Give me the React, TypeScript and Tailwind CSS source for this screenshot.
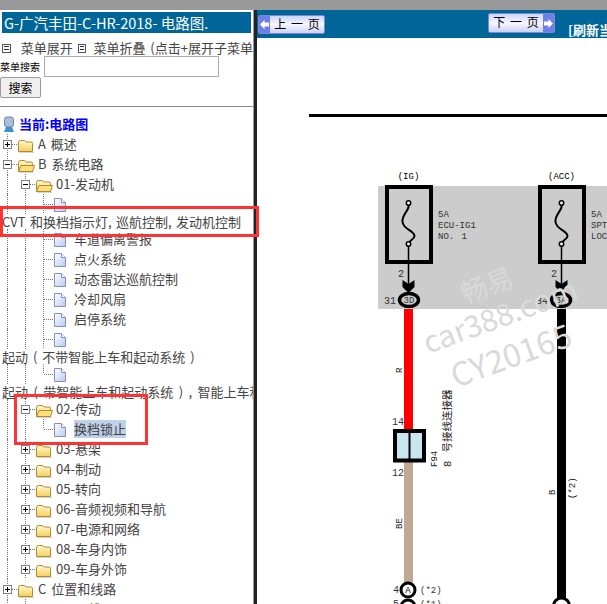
import React from 'react';

const FONT = '"Noto Sans CJK SC", "Liberation Sans", sans-serif';
const DIAGRAM_FONT = '"Liberation Mono", "Noto Sans CJK SC", monospace';

function Expander({ open }: { open: boolean }) {
  return (
    <svg width="18" height="20" className="shrink-0">
      <line x1="7.5" y1="0" x2="7.5" y2="20" stroke="#777" strokeDasharray="1 1" />
      <line x1="8" y1="10.5" x2="18" y2="10.5" stroke="#777" strokeDasharray="1 1" />
      <rect x="3.5" y="6.5" width="8" height="8" fill="#fff" stroke="#808080" />
      <line x1="5" y1="10.5" x2="10" y2="10.5" stroke="#000" />
      {!open && <line x1="7.5" y1="8" x2="7.5" y2="13" stroke="#000" />}
    </svg>
  );
}

function Connector({ last }: { last?: boolean }) {
  return (
    <svg width="18" height="20" className="shrink-0">
      <line x1="7.5" y1="0" x2="7.5" y2={last ? 10 : 20} stroke="#777" strokeDasharray="1 1" />
      <line x1="8" y1="10.5" x2="18" y2="10.5" stroke="#777" strokeDasharray="1 1" />
    </svg>
  );
}

function Folder({ open }: { open: boolean }) {
  return (
    <svg width="18" height="20" className="shrink-0">
      <defs>
        <linearGradient id="fold" x1="0" y1="0" x2="0" y2="1">
          <stop offset="0" stopColor="#fff9d0" />
          <stop offset="1" stopColor="#f6cf5c" />
        </linearGradient>
      </defs>
      <path d="M0.5 8.5 Q0.5 6.5 2.5 6.500 H6.5 L8 8 H13 Q14.500 8 14.500 9.5 V17.5 H0.5 Z" fill="url(#fold)" stroke="#b08a30" />
      {open && <path d="M0.5 17.5 L3 11.5 H16.5 L14.500 17.5 Z" fill="#fbe07a" stroke="#b08a30" />}
      <line x1="1" y1="18.5" x2="16" y2="18.5" stroke="#d5d5d5" />
    </svg>
  );
}

function FileIcon() {
  return (
    <svg width="18" height="20" className="shrink-0">
      <defs>
        <linearGradient id="page" x1="0" y1="0" x2="1" y2="1">
          <stop offset="0" stopColor="#fff" />
          <stop offset="1" stopColor="#b9cbf0" />
        </linearGradient>
      </defs>
      <path d="M0.5 4.5 H7.5 L11.5 8.5 V17.5 H0.5 Z" fill="url(#page)" stroke="#8590c2" />
      <path d="M7.5 4.5 V8.5 H11.5" fill="#fff" stroke="#8590c2" />
    </svg>
  );
}

function Guides({ count }: { count: number }) {
  return (
    <>
      {Array.from({ length: count }).map((_, i) => (
        <div key={i} className="w-[18px] h-full shrink-0">
          <div className="ml-[7px] h-full border-l border-dotted border-[#777]" />
        </div>
      ))}
    </>
  );
}

function FolderRow({ level, open, text }: { level: number; open?: boolean; text: string }) {
  return (
    <div className="flex items-center h-5 whitespace-nowrap">
      <Guides count={level} />
      <Expander open={!!open} />
      <Folder open={!!open} />
      <span className="ml-[2px]">{text}</span>
    </div>
  );
}

function FileRow({ text, last, selected }: { text?: string; last?: boolean; selected?: boolean }) {
  return (
    <div className="flex items-center h-5 whitespace-nowrap">
      <Guides count={2} />
      <Connector last={last} />
      <FileIcon />
      {text && (
        <span className={`ml-[2px] leading-[18px] ${selected ? 'bg-[#bfd0ea]' : ''}`}>{text}</span>
      )}
    </div>
  );
}

function TextRow({ text, className = '' }: { text: string; className?: string }) {
  return <div className={`h-[15px] leading-[15px] pl-[2px] whitespace-nowrap ${className}`}>{text}</div>;
}

function PageButton({ label, dir, className }: { label: string; dir: 'prev' | 'next'; className: string }) {
  const arrow = (
    <div className="w-[11px] h-full bg-[#6f7fe8] flex items-center justify-center">
      <svg width="9" height="9" viewBox="0 0 9 9">
        <path d={dir === 'prev' ? 'M0 4.5 L4.5 0 V2.5 H9 V6.5 H4.5 V9 Z' : 'M9 4.5 L4.5 0 V2.5 H0 V6.5 H4.5 V9 Z'} fill="#fff" />
      </svg>
    </div>
  );
  return (
    <div className={`flex w-[67px] shrink-0 items-stretch rounded-[2px] border border-[#8088c8] bg-gradient-to-b from-[#ccd4fa] via-[#f6f7ff] to-[#ccd0f6] text-black ${className}`}>
      {dir === 'prev' && arrow}
      <div className="flex-1 text-center text-[12px] leading-[16px] whitespace-nowrap">{label}</div>
      {dir === 'next' && arrow}
    </div>
  );
}

function FuseBox({ x, label }: { x: number; label: string }) {
  const cx = x + 23.5;
  return (
    <g>
      <text x={cx} y="179" textAnchor="middle" fontSize="9">{label}</text>
      <rect x={x + 2} y="187" width="44" height="75" fill="#ccc" stroke="#000" strokeWidth="4" />
      <path d={`M${cx} 204 C${cx + 2} 210 ${cx - 7} 214 ${cx - 6} 222 C${cx - 5} 230 ${cx + 6} 230 ${cx + 6} 236 C${cx + 6} 240 ${cx} 240 ${cx} 244`} fill="none" stroke="#000" strokeWidth="2" />
      <circle cx={cx} cy="203" r="2.2" fill="#fff" stroke="#000" strokeWidth="1.5" />
      <circle cx={cx} cy="244" r="2.2" fill="#fff" stroke="#000" strokeWidth="1.5" />
      <line x1={cx} y1="246" x2={cx} y2="285" stroke="#000" strokeWidth="1.5" />
      <path d={`M${cx - 6} 280 L${cx} 284 L${cx + 6} 280 L${cx + 6} 287 L${cx} 293 L${cx - 6} 287 Z`} fill="#000" />
    </g>
  );
}

function Diagram() {
  return (
    <svg viewBox="257 38 350 566" width="350" height="566" className="block" style={{ fontFamily: DIAGRAM_FONT }}>
      <rect x="309" y="114" width="298" height="3" fill="#000" />
      <rect x="378" y="186" width="229" height="123" fill="#ccc" />
      <rect x="404" y="309" width="9" height="121" fill="#f00" />
      <rect x="404" y="462" width="9" height="120" fill="#bfa993" />
      <rect x="557" y="309" width="9" height="290" fill="#000" />

      <FuseBox x={385} label="(IG)" />
      <FuseBox x={538} label="(ACC)" />

      <g fontSize="9" fill="#333">
        <text x="438" y="217">5A</text>
        <text x="438" y="228">ECU-IG1</text>
        <text x="438" y="239">NO. 1</text>
        <text x="591" y="217">5A</text>
        <text x="591" y="228">SPT</text>
        <text x="591" y="239">LOC</text>
        <text x="398" y="277" fontSize="10">2</text>
        <text x="551" y="277" fontSize="10">2</text>
        <text x="384" y="304" fontSize="10">31</text>
        <text x="536" y="304" fontSize="10">34</text>
      </g>
      <ellipse cx="409" cy="300" rx="9.500" ry="6.500" fill="#ccc" stroke="#000" strokeWidth="3.5" />
      <ellipse cx="561" cy="300" rx="9.500" ry="6.500" fill="#ccc" stroke="#000" strokeWidth="3.5" />
      <text x="409" y="303" textAnchor="middle" fontSize="9" fill="#333">3D</text>
      <text x="561" y="303" textAnchor="middle" fontSize="9" fill="#333">3A</text>

      <rect x="395" y="431" width="29" height="29.500" fill="#c9e6ef" stroke="#000" strokeWidth="4" />
      <line x1="409.500" y1="431" x2="409.500" y2="460" stroke="#000" strokeWidth="2" />
      <g fontSize="10" fill="#333">
        <text x="392" y="425">14</text>
        <text x="392" y="476">12</text>
        <text x="393" y="593">4</text>
        <text x="420" y="593" fontSize="9">(*2)</text>
        <text x="393" y="607">5</text>
        <text x="420" y="607" fontSize="9">(*1)</text>
      </g>
      <g fontSize="9" fill="#222">
        <text transform="translate(402 373) rotate(-90)">R</text>
        <text transform="translate(402 529) rotate(-90)">BE</text>
        <text transform="translate(437 467) rotate(-90)">F94</text>
        <text transform="translate(451 467) rotate(-90)" fontSize="10.500">8 号接线连接器</text>
        <text transform="translate(555 495) rotate(-90)">B</text>
        <text transform="translate(575 499) rotate(-90)">(*2)</text>
      </g>
      <circle cx="408" cy="590" r="7" fill="#fff" stroke="#000" strokeWidth="3" />
      <circle cx="408" cy="607" r="7" fill="#fff" stroke="#000" strokeWidth="3" />
      <circle cx="561.500" cy="606" r="8" fill="#fff" stroke="#000" strokeWidth="3" />
      <text x="408" y="593" textAnchor="middle" fontSize="9">A</text>

      <g fill="#d9d9d9" style={{ fontFamily: FONT }}>
        <text transform="translate(465 304) rotate(-20)" fontSize="27">畅易</text>
        <text transform="translate(428 354) rotate(-20)" fontSize="30">car388.com</text>
        <text transform="translate(456 388) rotate(-20)" fontSize="32">CY20165</text>
      </g>
    </svg>
  );
}

export default function App() {
  return (
    <div className="relative w-[607px] h-[604px] overflow-hidden bg-white text-[13px] text-[#444] [word-spacing:2px]" style={{ fontFamily: FONT }}>
      <div className="h-[10px] bg-[#999]" />
      <div className="flex h-[594px]">
        <div className="w-[253px] shrink-0 overflow-hidden">
          <div className="mx-[2px] mt-[2px] h-[21px] w-[249px] bg-[#006699] pl-[2px] text-[14.500px] leading-[21px] text-white whitespace-nowrap [word-spacing:0px]">
            G-广汽丰田-C-HR-2018- 电路图.
          </div>
          <div className="flex items-center h-[20px] mt-[5px] whitespace-nowrap">
            <span className="ml-[2px] flex h-[9px] w-[9px] flex-col justify-evenly border border-[#555] px-px">
              <i className="block h-px bg-[#333]" />
              <i className="block h-px bg-[#333]" />
            </span>
            <span className="ml-[10px]">菜单展开</span>
            <span className="ml-[5px] flex h-[9px] w-[9px] flex-col justify-evenly border border-[#555] px-px">
              <i className="block h-px bg-[#333]" />
              <i className="block h-px bg-[#333]" />
            </span>
            <span className="ml-[7px]">菜单折叠 (点击+展开子菜单</span>
          </div>
          <div className="flex items-center mt-[-2px] h-[21px]">
            <span className="w-[44px] text-[10px] text-black whitespace-nowrap">菜单搜索</span>
            <input className="w-[175px] h-[21px] border border-[#aaa] bg-white" />
          </div>
          <button className="block w-[41px] h-[21px] border border-[#999] rounded-[2px] bg-[#efefef] text-[12px] leading-[18px] text-black">
            搜索
          </button>
          <div className="mt-[8px] h-px bg-[#888]" />

          <div className="flex items-center h-5 mt-[7px] font-bold text-[#0000ff]">
            <svg width="14" height="17" viewBox="0 0 14 17" className="ml-[2px] mr-[3px]">
              <rect x="2.500" y="1" width="9" height="10" rx="2.500" fill="#a9bcd8" stroke="#6a84ad" />
              <path d="M4 11 L2 16 H12 L10 11 Z" fill="#3f8ccf" />
            </svg>
            当前:电路图
          </div>
          <FolderRow level={0} text="A 概述" />
          <FolderRow level={0} open text="B 系统电路" />
          <FolderRow level={1} open text="01-发动机" />
          <FileRow />
          <TextRow text="CVT 和换档指示灯, 巡航控制, 发动机控制" className="[word-spacing:1.500px]" />
          <FileRow text="车道偏离警报" />
          <FileRow text="点火系统" />
          <FileRow text="动态雷达巡航控制" />
          <FileRow text="冷却风扇" />
          <FileRow text="启停系统" />
          <FileRow />
          <TextRow text="起动 ( 不带智能上车和起动系统 )" />
          <FileRow last />
          <TextRow text="起动 ( 带智能上车和起动系统 ) , 智能上车和起动系统" className="[word-spacing:2.500px]" />
          <FolderRow level={1} open text="02-传动" />
          <FileRow text="换档锁止" last selected />
          <FolderRow level={1} text="03-悬架" />
          <FolderRow level={1} text="04-制动" />
          <FolderRow level={1} text="05-转向" />
          <FolderRow level={1} text="06-音频视频和导航" />
          <FolderRow level={1} text="07-电源和网络" />
          <FolderRow level={1} text="08-车身内饰" />
          <FolderRow level={1} text="09-车身外饰" />
          <FolderRow level={0} text="C 位置和线路" />
          <FolderRow level={1} text="01-配线" />
        </div>

        <div className="w-[4px] shrink-0 border-l border-[#999] bg-[#222]" />

        <div className="flex-1 min-w-0 overflow-hidden">
          <div className="flex h-[28px] bg-[#006699]">
            <PageButton label="上 一 页" dir="prev" className="mt-[5px] h-[19px] ml-px" />
            <PageButton label="下 一 页" dir="next" className="mt-[3px] h-[20px] ml-[163px]" />
            <span className="ml-[13px] mt-[11px] text-[13px] font-bold leading-[18px] text-white whitespace-nowrap">[刷新当前页]</span>
          </div>
          <Diagram />
        </div>
      </div>

      {/* annotation boxes drawn over the screenshot */}
      <div className="absolute left-0 top-[206px] h-[31px] w-[259px] border-[3px] border-[#f33]" />
      <div className="absolute left-[14px] top-[394px] h-[51px] w-[134px] border-[3px] border-[#f33]" />
    </div>
  );
}
